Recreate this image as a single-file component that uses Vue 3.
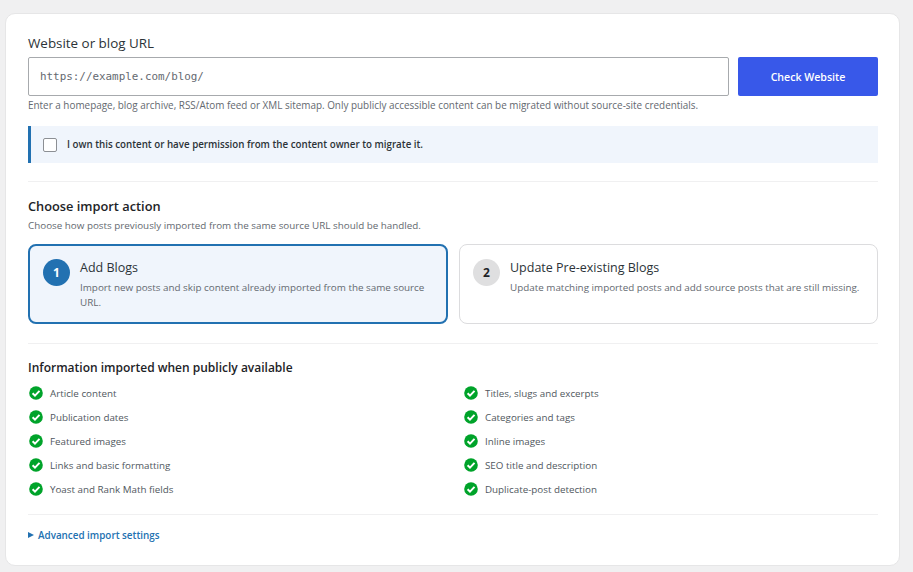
<template>
  <div class="page">
    <div class="card">
      <label class="field-label">Website or blog URL</label>
      <div class="url-row">
        <input class="url-input" type="text" placeholder="https://example.com/blog/" />
        <button class="check-btn">Check Website</button>
      </div>
      <p class="hint">
        Enter a homepage, blog archive, RSS/Atom feed or XML sitemap. Only publicly accessible content can be migrated without source-site credentials.
      </p>

      <label class="notice">
        <span class="checkbox"></span>
        <span>I own this content or have permission from the content owner to migrate it.</span>
      </label>

      <hr class="divider first" />

      <h3 class="section-title">Choose import action</h3>
      <p class="section-sub">Choose how posts previously imported from the same source URL should be handled.</p>

      <div class="actions">
        <div
          v-for="action in actions"
          :key="action.num"
          class="action"
          :class="{ selected: action.selected }"
        >
          <span class="num">{{ action.num }}</span>
          <div class="action-body">
            <div class="action-title">{{ action.title }}</div>
            <div class="action-text">{{ action.text }}</div>
          </div>
        </div>
      </div>

      <hr class="divider second" />

      <h3 class="info-title">Information imported when publicly available</h3>
      <ul class="info-list">
        <li v-for="item in items" :key="item">
          <svg class="check" viewBox="0 0 14 14" width="14" height="14">
            <circle cx="7" cy="7" r="6.8" fill="#00a32a" />
            <path d="M3.6 7.2 6 9.6 10.5 4.9" fill="none" stroke="#fff" stroke-width="2" />
          </svg>
          <span>{{ item }}</span>
        </li>
      </ul>

      <hr class="divider third" />

      <div class="advanced">
        <span class="arrow"></span>
        <span>Advanced import settings</span>
      </div>
    </div>
  </div>
</template>

<script setup>
const actions = [
  {
    num: 1,
    title: "Add Blogs",
    text: "Import new posts and skip content already imported from the same source URL.",
    selected: true,
  },
  {
    num: 2,
    title: "Update Pre-existing Blogs",
    text: "Update matching imported posts and add source posts that are still missing.",
    selected: false,
  },
];

const items = [
  "Article content",
  "Titles, slugs and excerpts",
  "Publication dates",
  "Categories and tags",
  "Featured images",
  "Inline images",
  "Links and basic formatting",
  "SEO title and description",
  "Yoast and Rank Math fields",
  "Duplicate-post detection",
];
</script>

<style>
html,
body {
  margin: 0;
  background: #f0f0f1;
}
</style>

<style scoped>
.page {
  height: 572px;
  box-sizing: border-box;
  padding: 13px 13px 0 5px;
  overflow: hidden;
  font-family: "Open Sans", "Noto Sans", sans-serif;
  color: #1d2327;
}

.card {
  height: 553px;
  box-sizing: border-box;
  padding: 19px 21px 0 22px;
  background: #fff;
  border: 1px solid #e6e6e7;
  border-radius: 10px;
}

.field-label {
  display: block;
  font-size: 13.4px;
  line-height: 20px;
  font-weight: 500;
  color: #2c3338;
}

.url-row {
  display: flex;
  gap: 9px;
  margin-top: 4px;
}

.url-input {
  flex: 1;
  min-width: 0;
  height: 39px;
  box-sizing: border-box;
  padding: 0 11px;
  border: 1px solid #a7aaad;
  border-radius: 2px;
  outline: none;
  font-family: "DejaVu Sans Mono", monospace;
  font-size: 10.9px;
  color: #2c3338;
}

.url-input::placeholder {
  color: #646970;
  opacity: 1;
}

.check-btn {
  flex: none;
  width: 140px;
  height: 39px;
  border: 0;
  border-radius: 2px;
  background: #3858e9;
  color: #fff;
  font-family: inherit;
  font-size: 10.6px;
  font-weight: 600;
}

.hint {
  margin: 0;
  font-size: 9.92px;
  line-height: 18px;
  color: #646970;
  white-space: nowrap;
}

.notice {
  display: flex;
  align-items: center;
  gap: 10px;
  height: 37px;
  box-sizing: border-box;
  margin-top: 12px;
  padding-left: 12px;
  background: #f0f5fc;
  border-left: 3px solid #2271b1;
  font-size: 9.75px;
  font-weight: 600;
  color: #2c3338;
}

.checkbox {
  width: 14px;
  height: 14px;
  box-sizing: border-box;
  background: #fff;
  border: 1px solid #8c8f94;
  border-radius: 2px;
}

.divider {
  margin: 0;
  border: 0;
  border-top: 1px solid #f0f0f1;
}

.divider.first {
  margin-top: 18px;
}

.divider.second {
  margin-top: 19px;
}

.divider.third {
  margin-top: 13px;
}

.section-title {
  margin: 14px 0 0;
  font-size: 12.8px;
  line-height: 20px;
  font-weight: 600;
}

.section-sub {
  margin: 0;
  font-size: 9.83px;
  line-height: 18px;
  color: #646970;
}

.actions {
  display: grid;
  grid-template-columns: 420px 419px;
  gap: 11px;
  margin-top: 10px;
}

.action {
  display: flex;
  gap: 10px;
  height: 80px;
  box-sizing: border-box;
  padding: 14px 14px 14px 13px;
  background: #fff;
  border: 1px solid #dcdcde;
  border-radius: 8px;
}

.action.selected {
  background: #f0f5fc;
  border: 2px solid #2271b1;
  padding: 13px;
}

.num {
  flex: none;
  display: flex;
  align-items: center;
  justify-content: center;
  width: 27px;
  height: 27px;
  border-radius: 50%;
  background: #dfdfe0;
  font-size: 12px;
  font-weight: 700;
}

.selected .num {
  background: #2271b1;
  color: #fff;
}

.action-body {
  min-width: 0;
}

.action-title {
  font-size: 12.5px;
  line-height: 18px;
  font-weight: 500;
  color: #2c3338;
}

.action-text {
  margin-top: 3px;
  font-size: 9.85px;
  line-height: 15px;
  color: #646970;
}

.info-title {
  margin: 14px 0 0;
  font-size: 12px;
  line-height: 20px;
  font-weight: 600;
}

.info-list {
  display: grid;
  grid-template-columns: 435px 1fr;
  grid-auto-rows: 24px;
  margin: 3px 0 0;
  padding: 0;
  list-style: none;
}

.info-list li {
  display: flex;
  align-items: center;
  gap: 7px;
  font-size: 9.8px;
  color: #50575e;
}

.check {
  flex: none;
  margin-left: 1px;
}

.advanced {
  display: flex;
  align-items: center;
  gap: 4px;
  margin-top: 11px;
  font-size: 9.85px;
  line-height: 18px;
  font-weight: 600;
  color: #2271b1;
}

.arrow {
  width: 0;
  height: 0;
  border-left: 6px solid #2271b1;
  border-top: 3.5px solid transparent;
  border-bottom: 3.5px solid transparent;
}
</style>
